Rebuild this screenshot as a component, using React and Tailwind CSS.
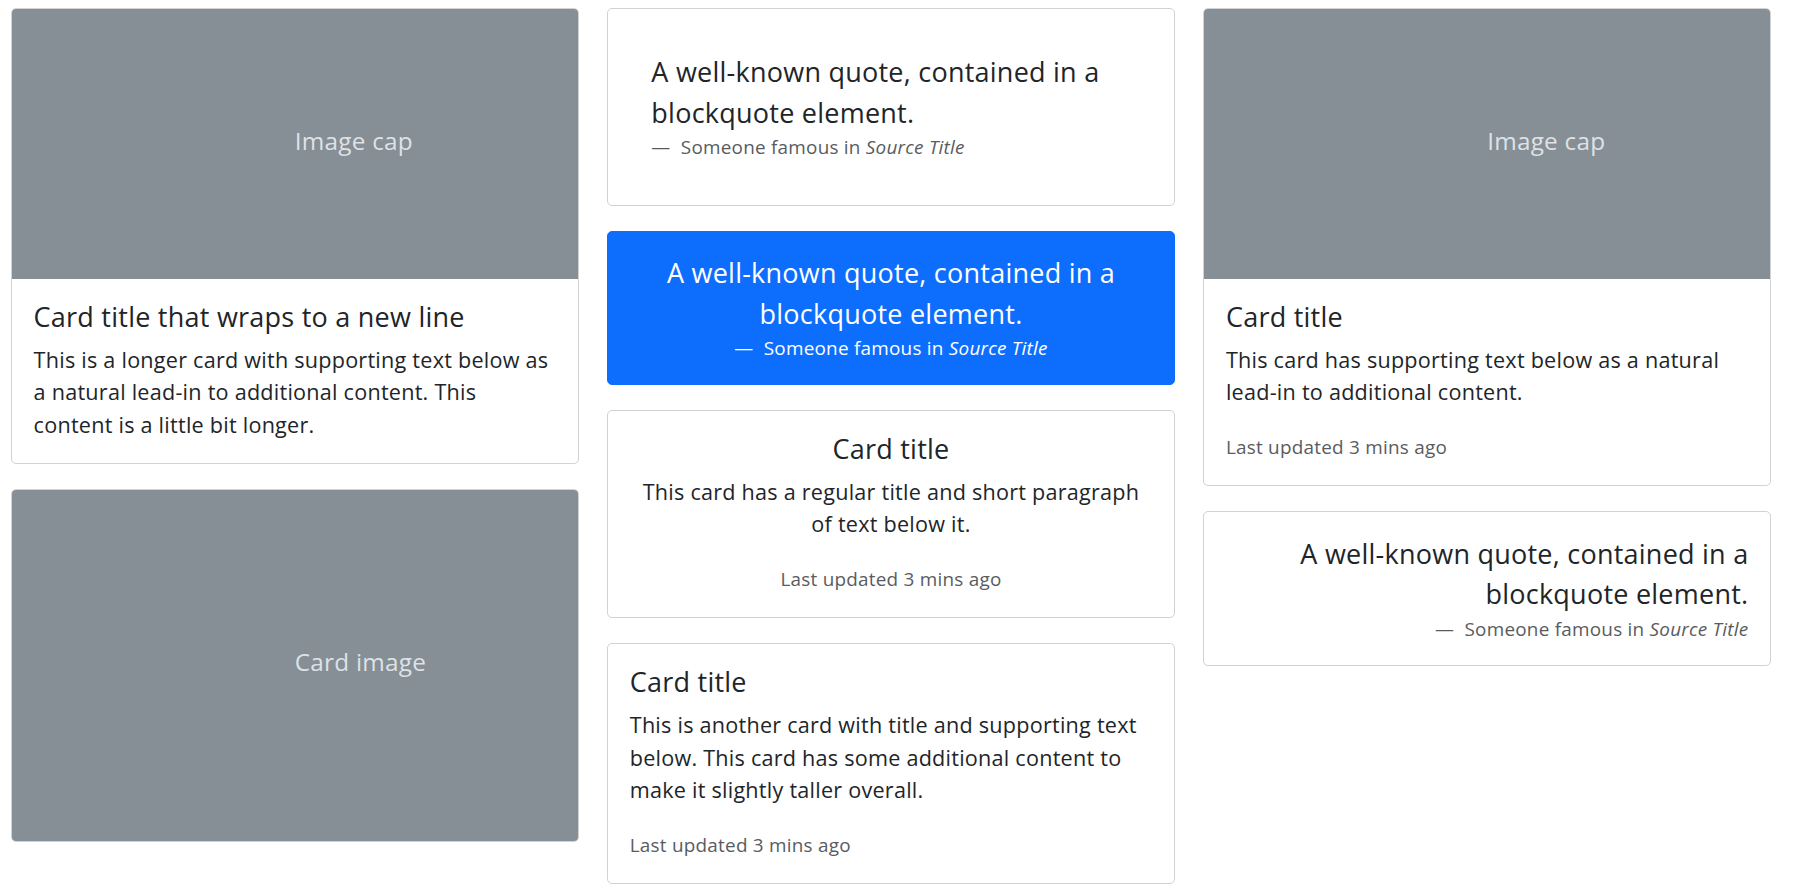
const body = "text-[21.6px] leading-[32.4px]";

function Card({ className = "", children }) {
    return (
        <div className={"border border-[#d2d2d2] rounded-[5px] bg-white overflow-hidden " + className}>
            {children}
        </div>
    );
}

function Placeholder({ className, label }) {
    return (
        <div className={"flex items-center pl-[50%] bg-[#868e96] text-[#dee2e6] text-[24.3px] " + className}>
            <span className="-translate-y-[3px]">{label}</span>
        </div>
    );
}

// lines are broken where the reference breaks them
function Lines({ lines }) {
    return lines.map((l, i) => (
        <span key={i}>
            {i > 0 && <br />}
            {l}
        </span>
    ));
}

function CardBody({ title, lines, muted, center }) {
    return (
        <div className={"p-[21.6px] " + (center ? "text-center" : "")}>
            <h5 className="text-[27px] leading-[32.4px] mb-[10.8px]">{title}</h5>
            <p className={body}>
                <Lines lines={lines} />
            </p>
            {muted && (
                <p className={body + " mt-[21.6px]"}>
                    <small className="text-[18.9px] text-[#595c5f]">Last updated 3 mins ago</small>
                </p>
            )}
        </div>
    );
}

function Quote({ footerClass = "text-[#595c5f]" }) {
    return (
        <figure>
            <blockquote className="text-[27px] leading-[40.5px]">
                <p>A well-known quote, contained in a blockquote element.</p>
            </blockquote>
            <figcaption className={"text-[18.9px] leading-[28.35px] " + footerClass}>
                {"\u2014\u00a0 "}Someone famous in <cite className="italic">Source Title</cite>
            </figcaption>
        </figure>
    );
}

export default function App() {
    return (
        <div className="min-h-screen bg-white text-[#212529] font-['Open_Sans',sans-serif] tracking-[0.015em] pt-[8px] pl-[11px]">
            <div className="grid grid-cols-3 gap-x-[28.5px] w-[1760px] items-start">
                <div className="flex flex-col gap-[25px]">
                    <Card>
                        <Placeholder className="h-[270px]" label="Image cap" />
                        <CardBody
                            title="Card title that wraps to a new line"
                            lines={[
                                "This is a longer card with supporting text below as",
                                "a natural lead-in to additional content. This",
                                "content is a little bit longer.",
                            ]}
                        />
                    </Card>
                    <Card>
                        <Placeholder className="h-[351px]" label="Card image" />
                    </Card>
                </div>

                <div className="flex flex-col gap-[25px]">
                    <Card className="p-[43.2px]">
                        <Quote />
                    </Card>
                    <div className="rounded-[5px] border border-[#0d6efd] bg-[#0d6efd] text-white text-center p-[21.6px]">
                        <Quote footerClass="text-white" />
                    </div>
                    <Card>
                        <CardBody
                            center
                            muted
                            title="Card title"
                            lines={["This card has a regular title and short paragraph", "of text below it."]}
                        />
                    </Card>
                    <Card>
                        <CardBody
                            muted
                            title="Card title"
                            lines={[
                                "This is another card with title and supporting text",
                                "below. This card has some additional content to",
                                "make it slightly taller overall.",
                            ]}
                        />
                    </Card>
                </div>

                <div className="flex flex-col gap-[25px]">
                    <Card>
                        <Placeholder className="h-[270px]" label="Image cap" />
                        <CardBody
                            muted
                            title="Card title"
                            lines={["This card has supporting text below as a natural", "lead-in to additional content."]}
                        />
                    </Card>
                    <Card className="p-[21.6px] text-right">
                        <Quote />
                    </Card>
                </div>
            </div>
        </div>
    );
}
